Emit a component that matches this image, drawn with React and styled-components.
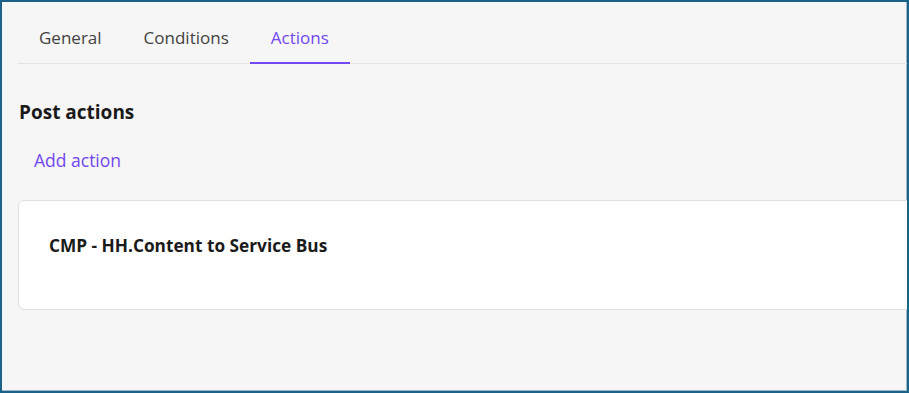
import React from "react";
import styled, { createGlobalStyle } from "styled-components";

const GlobalStyle = createGlobalStyle`
  html, body {
    margin: 0;
    padding: 0;
    background: #ffffff;
  }
  body {
    font-family: "Open Sans", "Noto Sans", sans-serif;
  }
`;

const tabs = ["General", "Conditions", "Actions"];

const App = () => {
  return (
    <>
      <GlobalStyle />
      <Frame>
        <Content>
          <TabBar>
            {tabs.map((t) => (
              <Tab key={t} active={t === "Actions"}>
                {t}
              </Tab>
            ))}
          </TabBar>

          <SectionTitle>Post actions</SectionTitle>
          <AddAction>Add action</AddAction>

          <Card>
            <CardTitle>CMP - HH.Content to Service Bus</CardTitle>
          </Card>
        </Content>
      </Frame>
    </>
  );
};

export default App;

// Styled-components
const Frame = styled.div`
  width: 909px;
  height: 393px;
  box-sizing: border-box;
  border: 2px solid #1b6289;
  box-shadow: inset -1px -1px 0 #9fb6c6;
  background-color: #f6f6f6;
  overflow: hidden;
`;

const Content = styled.div`
  width: 1000px;
  padding: 14px 0 0 16px;
`;

const TabBar = styled.div`
  display: flex;
  border-bottom: 1px solid #e3e3e3;
`;

const Tab = styled.div`
  padding: 0 21px;
  height: 48px;
  line-height: 44px;
  font-size: 17px;
  color: ${(p) => (p.active ? "#7246f0" : "#424242")};
  border-bottom: 2px solid ${(p) => (p.active ? "#7246f0" : "transparent")};
  margin-bottom: -1px;
  box-sizing: border-box;
`;

const SectionTitle = styled.div`
  margin-top: 36px;
  margin-left: 1px;
  font-size: 19px;
  font-weight: 700;
  color: #1a1a1a;
  line-height: 24px;
`;

const AddAction = styled.div`
  margin-top: 24px;
  margin-left: 16px;
  font-size: 17.5px;
  color: #7246f0;
  line-height: 24px;
`;

const Card = styled.div`
  margin-top: 28px;
  height: 110px;
  box-sizing: border-box;
  padding: 34px 30px;
  background-color: #ffffff;
  border: 1px solid #e1e1e1;
  border-radius: 6px;
`;

const CardTitle = styled.div`
  font-size: 17.25px;
  font-weight: 700;
  color: #1a1a1a;
  line-height: 22px;
`;
